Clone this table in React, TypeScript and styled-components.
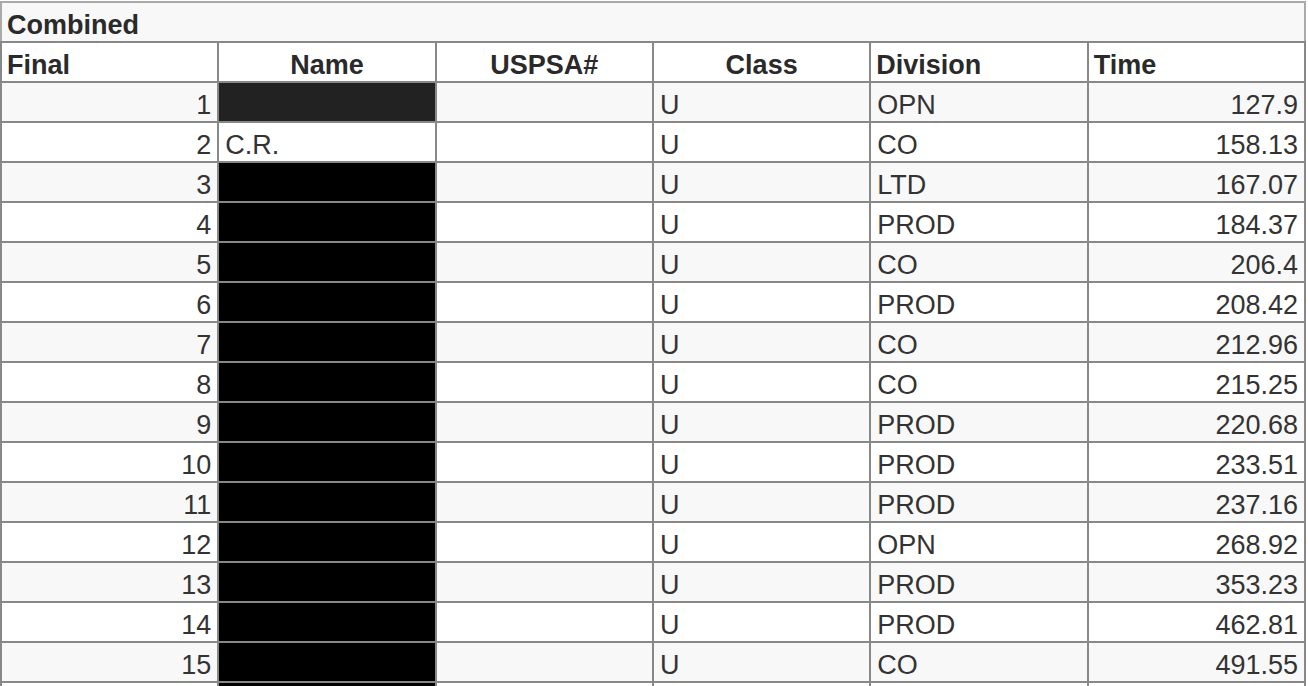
import React from 'react';
import styled, { createGlobalStyle } from 'styled-components';

const GlobalStyle = createGlobalStyle`
  html, body {
    margin: 0;
    padding: 0;
    background: #fff;
  }
  body {
    font-family: "Liberation Sans", Arial, Helvetica, sans-serif;
    color: #333;
    overflow: hidden;
  }
`;

const Table = styled.table`
  border-collapse: collapse;
  table-layout: fixed;
  width: 1306px;
  margin-top: 1px;
  font-size: 27px;
  line-height: 30px;
`;

const TitleCell = styled.th`
  background: #f8f8f8;
  border: 2px solid #aaa;
  border-bottom-color: #888;
  text-align: left;
  padding: 6px 5px 0;
  height: 32px;
  font-weight: bold;
  color: #2a2a2a;
`;

const HeadCell = styled.th<{ $align?: 'left' | 'center' }>`
  background: #fff;
  border: 2px solid #888;
  text-align: ${p => p.$align || 'left'};
  padding: 6px 5px 1px;
  height: 31px;
  font-weight: bold;
  color: #2a2a2a;
`;

const Row = styled.tr<{ $odd: boolean }>`
  background: ${p => (p.$odd ? '#f8f8f8' : '#fff')};
`;

const Cell = styled.td<{ $align?: 'left' | 'right'; $fill?: string }>`
  border: 2px solid #888;
  text-align: ${p => p.$align || 'left'};
  padding: 6px 6px 1px;
  height: 31px;
  white-space: nowrap;
  overflow: hidden;
  color: #333;
  background: ${p => p.$fill || 'transparent'};
`;

type Result = { place: number; name?: string; cls: string; div: string; time: string };

const results: Result[] = [
  { place: 1, cls: 'U', div: 'OPN', time: '127.9' },
  { place: 2, name: 'C.R.', cls: 'U', div: 'CO', time: '158.13' },
  { place: 3, cls: 'U', div: 'LTD', time: '167.07' },
  { place: 4, cls: 'U', div: 'PROD', time: '184.37' },
  { place: 5, cls: 'U', div: 'CO', time: '206.4' },
  { place: 6, cls: 'U', div: 'PROD', time: '208.42' },
  { place: 7, cls: 'U', div: 'CO', time: '212.96' },
  { place: 8, cls: 'U', div: 'CO', time: '215.25' },
  { place: 9, cls: 'U', div: 'PROD', time: '220.68' },
  { place: 10, cls: 'U', div: 'PROD', time: '233.51' },
  { place: 11, cls: 'U', div: 'PROD', time: '237.16' },
  { place: 12, cls: 'U', div: 'OPN', time: '268.92' },
  { place: 13, cls: 'U', div: 'PROD', time: '353.23' },
  { place: 14, cls: 'U', div: 'PROD', time: '462.81' },
  { place: 15, cls: 'U', div: 'CO', time: '491.55' },
];

const nameFill = (r: Result) => {
  if (r.name) return undefined;
  return r.place === 1 ? '#222' : '#000';
};

export default function App() {
  return (
    <>
      <GlobalStyle />
      <Table>
        <thead>
          <tr>
            <TitleCell colSpan={6}>Combined</TitleCell>
          </tr>
          <tr>
            <HeadCell>Final</HeadCell>
            <HeadCell $align="center">Name</HeadCell>
            <HeadCell $align="center">USPSA#</HeadCell>
            <HeadCell $align="center">Class</HeadCell>
            <HeadCell>Division</HeadCell>
            <HeadCell>Time</HeadCell>
          </tr>
        </thead>
        <tbody>
          {results.map(r => (
            <Row key={r.place} $odd={r.place % 2 === 1}>
              <Cell $align="right">{r.place}</Cell>
              <Cell $fill={nameFill(r)}>{r.name}</Cell>
              <Cell />
              <Cell>{r.cls}</Cell>
              <Cell>{r.div}</Cell>
              <Cell $align="right">{r.time}</Cell>
            </Row>
          ))}
          {/* next row is only just visible at the bottom edge */}
          <Row $odd={false}>
            <Cell />
            <Cell $fill="#000" />
            <Cell />
            <Cell />
            <Cell />
            <Cell />
          </Row>
        </tbody>
      </Table>
    </>
  );
}
